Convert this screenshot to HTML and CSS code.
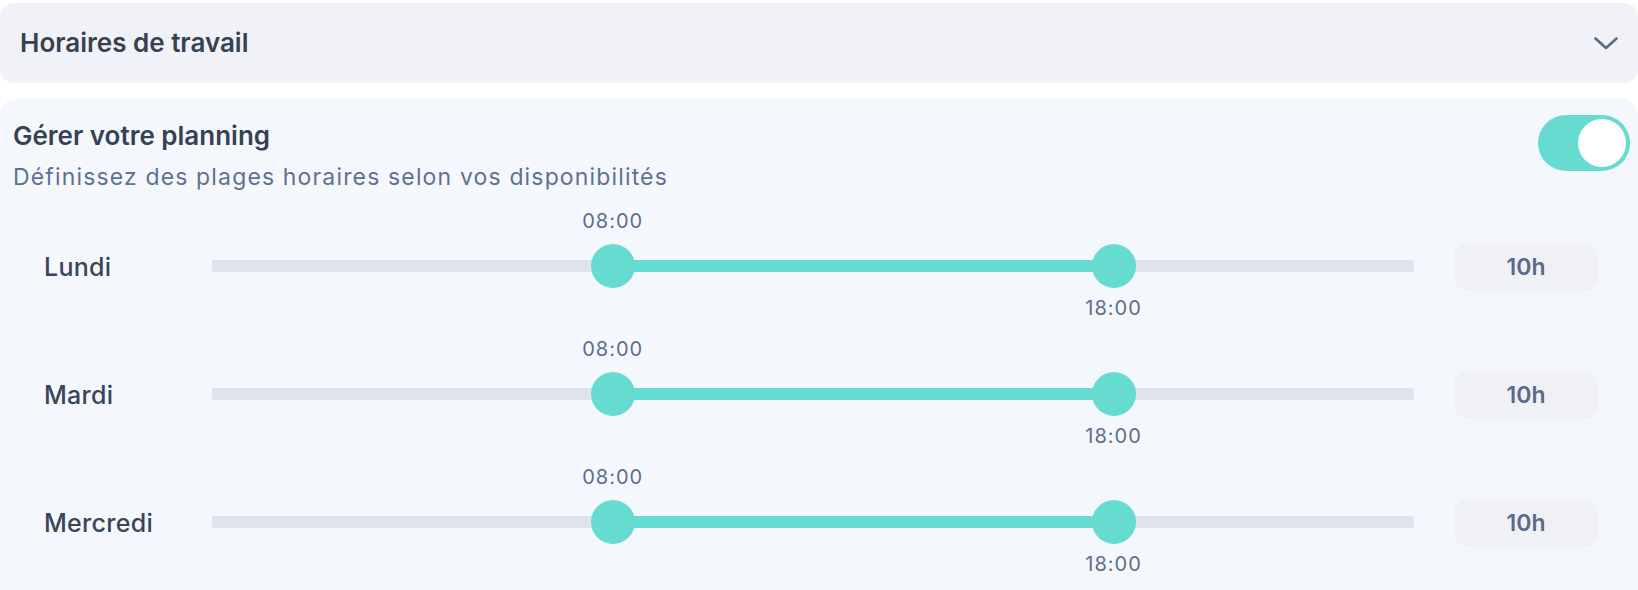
FILE: index.html
```html
<!DOCTYPE html>
<html lang="fr">
<head>
<meta charset="utf-8">
<title>Horaires de travail</title>
<link rel="stylesheet" href="styles.css">
</head>
<body>
<div class="accordion">
  <div class="accordion-head">
    <span class="accordion-title">Horaires de travail</span>
    <svg class="chevron" width="24" height="13" viewBox="0 0 24 13" aria-hidden="true"><path d="M1.5 1.5 L12 11 L22.5 1.5" fill="none" stroke="#5a6b8a" stroke-width="2.6" stroke-linecap="round" stroke-linejoin="round"/></svg>
  </div>
</div>

<div class="panel">
  <div class="panel-head">
    <div class="panel-text">
      <div class="panel-title">Gérer votre planning</div>
      <div class="panel-sub">Définissez des plages horaires selon vos disponibilités</div>
    </div>
    <div class="toggle"><span class="knob"></span></div>
  </div>

  <div class="days">
    <div class="day-row">
      <div class="day-name">Lundi</div>
      <div class="slider">
        <div class="track"></div>
        <div class="range" style="left:33.333%;width:41.667%"></div>
        <div class="handle" style="left:33.333%"><span class="lbl lbl-top">08:00</span></div>
        <div class="handle" style="left:75%"><span class="lbl lbl-bottom">18:00</span></div>
      </div>
      <div class="badge">10h</div>
    </div>
    <div class="day-row">
      <div class="day-name">Mardi</div>
      <div class="slider">
        <div class="track"></div>
        <div class="range" style="left:33.333%;width:41.667%"></div>
        <div class="handle" style="left:33.333%"><span class="lbl lbl-top">08:00</span></div>
        <div class="handle" style="left:75%"><span class="lbl lbl-bottom">18:00</span></div>
      </div>
      <div class="badge">10h</div>
    </div>
    <div class="day-row">
      <div class="day-name">Mercredi</div>
      <div class="slider">
        <div class="track"></div>
        <div class="range" style="left:33.333%;width:41.667%"></div>
        <div class="handle" style="left:33.333%"><span class="lbl lbl-top">08:00</span></div>
        <div class="handle" style="left:75%"><span class="lbl lbl-bottom">18:00</span></div>
      </div>
      <div class="badge">10h</div>
    </div>
  </div>
</div>
</body>
</html>
```

FILE: styles.css
```css
* { box-sizing: border-box; }

html, body {
  margin: 0;
  padding: 0;
  background: #ffffff;
  font-family: Inter, "Noto Sans", "Liberation Sans", sans-serif;
  color: #364152;
}

body {
  padding-top: 3px;
  overflow: hidden;
  height: 590px;
}

.accordion {
  background: #f0f2f7;
  border-radius: 14px;
}

.accordion-head {
  height: 80px;
  display: flex;
  align-items: center;
  justify-content: space-between;
  padding: 0 20px 0 20px;
}

.accordion-title {
  font-size: 26px;
  font-weight: 600;
  color: #364152;
  line-height: 32px;
}

.chevron { display: block; margin-top: 1px; }

.panel {
  margin-top: 16px;
  background: #f4f7fc;
  border-radius: 16px 16px 0 0;
  padding: 16px 8px 0 13px;
  height: 491px;
  overflow: hidden;
}

.panel-head {
  display: flex;
  justify-content: space-between;
  align-items: flex-start;
}

.panel-text { padding-top: 5px; }

.panel-title {
  font-size: 26px;
  font-weight: 600;
  line-height: 32px;
  color: #364152;
}

.panel-sub {
  margin-top: 10px;
  font-size: 23px;
  line-height: 30px;
  letter-spacing: 1.15px;
  color: #5f7190;
}

.toggle {
  width: 92px;
  height: 56px;
  border-radius: 28px;
  background: #66dbcf;
  padding: 4px;
  display: flex;
  justify-content: flex-end;
}

.knob {
  width: 48px;
  height: 48px;
  border-radius: 50%;
  background: #ffffff;
}

.days {
  margin-top: 10px;
  margin-left: -13px;
  margin-right: -8px;
}

.day-row {
  height: 128px;
  display: flex;
  align-items: center;
  padding: 0 40px 0 44px;
}

.day-name {
  width: 168px;
  flex: none;
  font-size: 25px;
  font-weight: 500;
  letter-spacing: 0.3px;
  color: #3a4558;
  padding-top: 2px;
}

.slider {
  position: relative;
  flex: 1;
  height: 44px;
}

.track {
  position: absolute;
  left: 0;
  right: 0;
  top: 16px;
  height: 12px;
  background: #dfe4ef;
}

.range {
  position: absolute;
  top: 16px;
  height: 12px;
  background: #66dbcf;
}

.handle {
  position: absolute;
  top: 0;
  width: 44px;
  height: 44px;
  margin-left: -22px;
  border-radius: 50%;
  background: #66dbcf;
}

.lbl {
  position: absolute;
  left: 50%;
  transform: translateX(-50%);
  font-size: 20px;
  line-height: 24px;
  letter-spacing: 1px;
  color: #5d6e8c;
  white-space: nowrap;
}

.lbl-top { bottom: calc(100% + 11px); }
.lbl-bottom { top: calc(100% + 8px); }

.badge {
  flex: none;
  margin-left: 40px;
  margin-top: 2px;
  width: 144px;
  height: 48px;
  border-radius: 14px;
  background: #eff1f6;
  display: flex;
  align-items: center;
  justify-content: center;
  font-size: 23px;
  font-weight: 600;
  color: #5a6b8a;
}
```
